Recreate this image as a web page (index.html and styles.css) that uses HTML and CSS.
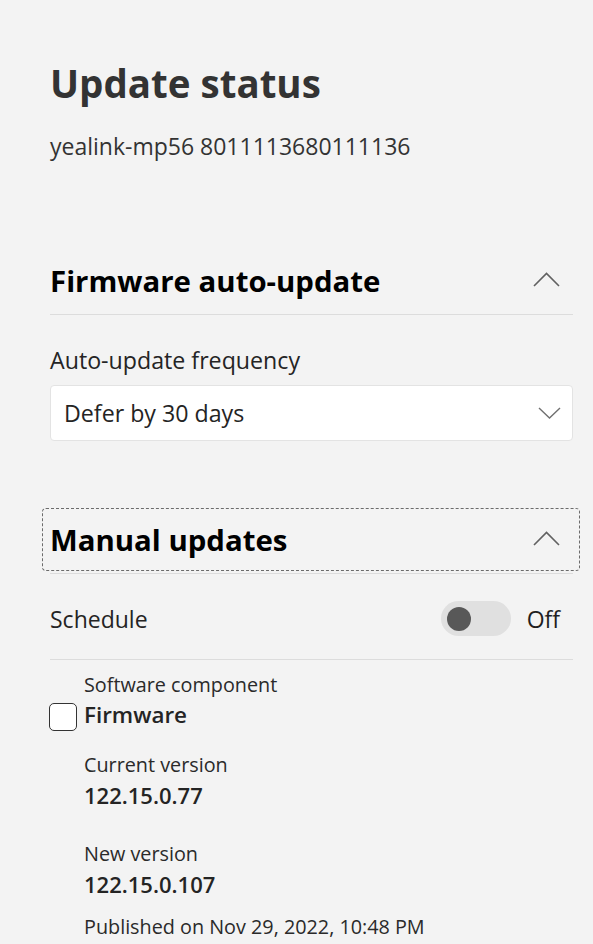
FILE: index.html
```html
<!DOCTYPE html>
<html lang="en">
<head>
<meta charset="utf-8">
<title>Update status</title>
<link rel="stylesheet" href="styles.css">
</head>
<body>
<main class="panel">
  <header class="page-head">
    <h1 class="title">Update status</h1>
    <p class="subtitle">yealink-mp56 8011113680111136</p>
  </header>

  <section class="section section-auto">
    <button class="section-head" type="button">
      <span class="section-title">Firmware auto-update</span>
      <svg class="chev-up" width="27" height="15" viewBox="0 0 27 15" aria-hidden="true"><path d="M1 14 L13.5 1.5 L26 14" fill="none" stroke="#616161" stroke-width="1.6"/></svg>
    </button>
    <div class="divider"></div>
    <div class="field-label">Auto-update frequency</div>
    <div class="dropdown">
      <span class="dropdown-value">Defer by 30 days</span>
      <svg class="chev-down" width="23" height="12" viewBox="0 0 23 12" aria-hidden="true"><path d="M1 1 L11.5 11 L22 1" fill="none" stroke="#707070" stroke-width="1.4"/></svg>
    </div>
  </section>

  <section class="section section-manual">
    <button class="section-head focused" type="button">
      <span class="section-title">Manual updates</span>
      <svg class="chev-up" width="27" height="15" viewBox="0 0 27 15" aria-hidden="true"><path d="M1 14 L13.5 1.5 L26 14" fill="none" stroke="#616161" stroke-width="1.6"/></svg>
    </button>
    <div class="divider"></div>
    <div class="schedule-row">
      <span class="schedule-label">Schedule</span>
      <span class="toggle-wrap">
        <span class="toggle"><span class="knob"></span></span>
        <span class="toggle-text">Off</span>
      </span>
    </div>
    <div class="divider"></div>
    <div class="component">
      <div class="meta-label component-label">Software component</div>
      <div class="check-row">
        <span class="checkbox"></span>
        <span class="component-name">Firmware</span>
      </div>
      <div class="meta-group">
        <div class="meta-label">Current version</div>
        <div class="meta-value">122.15.0.77</div>
      </div>
      <div class="meta-group meta-group-new">
        <div class="meta-label">New version</div>
        <div class="meta-value">122.15.0.107</div>
        <div class="meta-label published">Published on Nov 29, 2022, 10:48 PM</div>
      </div>
    </div>
  </section>
</main>
</body>
</html>
```

FILE: styles.css
```css
* { box-sizing: border-box; }

html, body {
  margin: 0;
  padding: 0;
  background: #f3f3f3;
}

body {
  font-family: "Open Sans", "Noto Sans", "Liberation Sans", sans-serif;
  color: #242424;
}

.panel {
  padding: 59px 20px 0 50px;
  display: flex;
  flex-direction: column;
}

.title {
  margin: 0;
  font-size: 38.5px;
  line-height: 48px;
  font-weight: 700;
  color: #333333;
}

.subtitle {
  margin: 24px 0 0;
  font-size: 23px;
  line-height: 30px;
  color: #333333;
}

.section {
  display: flex;
  flex-direction: column;
}

.section-auto { margin-top: 88px; }
.section-manual { margin-top: 67px; }

.section-head {
  display: flex;
  align-items: center;
  justify-content: space-between;
  height: 63px;
  margin: 0 -7px 0 -8px;
  padding: 0 19px 0 7px;
  border: 1px solid transparent;
  border-radius: 4px;
  background: transparent;
  font: inherit;
  text-align: left;
  cursor: pointer;
}

.section-head.focused {
  border: 1px dashed #6b6b6b;
}

.section-title {
  font-size: 29.4px;
  line-height: 36px;
  font-weight: 700;
  color: #000000;
}

.chev-up { display: block; margin-top: -3px; }

.divider {
  height: 1px;
  margin-top: 2px;
  background: #dcdcdc;
}

.field-label {
  margin-top: 30px;
  font-size: 23.2px;
  line-height: 30px;
}

.dropdown {
  margin-top: 10px;
  height: 56px;
  display: flex;
  align-items: center;
  justify-content: space-between;
  padding: 0 11px 0 13px;
  background: #ffffff;
  border: 1px solid #e3e3e3;
  border-radius: 4px;
}

.dropdown-value {
  font-size: 23.2px;
  line-height: 30px;
}

.chev-down { display: block; }

.schedule-row {
  display: flex;
  align-items: center;
  justify-content: space-between;
  padding: 27px 13px 21px 0;
}

.schedule-label {
  font-size: 23px;
  line-height: 30px;
}

.toggle-wrap {
  display: flex;
  align-items: center;
  gap: 16px;
}

.toggle {
  width: 70px;
  height: 35px;
  border-radius: 18px;
  background: #e0e0e0;
  display: flex;
  align-items: center;
  padding-left: 6px;
}

.knob {
  width: 24px;
  height: 24px;
  border-radius: 50%;
  background: #585858;
}

.toggle-text {
  font-size: 23px;
  line-height: 30px;
  color: #1f1f1f;
}

.component {
  padding: 12px 0 0 34px;
  display: flex;
  flex-direction: column;
}

.meta-label {
  font-size: 19.8px;
  line-height: 26px;
  color: #2a2a2a;
}

.check-row {
  display: flex;
  align-items: flex-start;
  margin: 5px 0 0 -35px;
  gap: 7px;
}

.checkbox {
  width: 28px;
  height: 28px;
  border: 1px solid #333333;
  border-radius: 5px;
  background: #ffffff;
  flex: none;
}

.component-name {
  font-size: 22.4px;
  line-height: 24px;
  font-weight: 600;
  color: #242424;
}

.meta-group {
  display: flex;
  flex-direction: column;
  margin-top: 21px;
}

.meta-group-new { margin-top: 31px; }

.meta-value {
  margin-top: 2px;
  font-size: 22px;
  line-height: 30px;
  font-weight: 600;
  color: #242424;
}

.published { margin-top: 15px; }
```
